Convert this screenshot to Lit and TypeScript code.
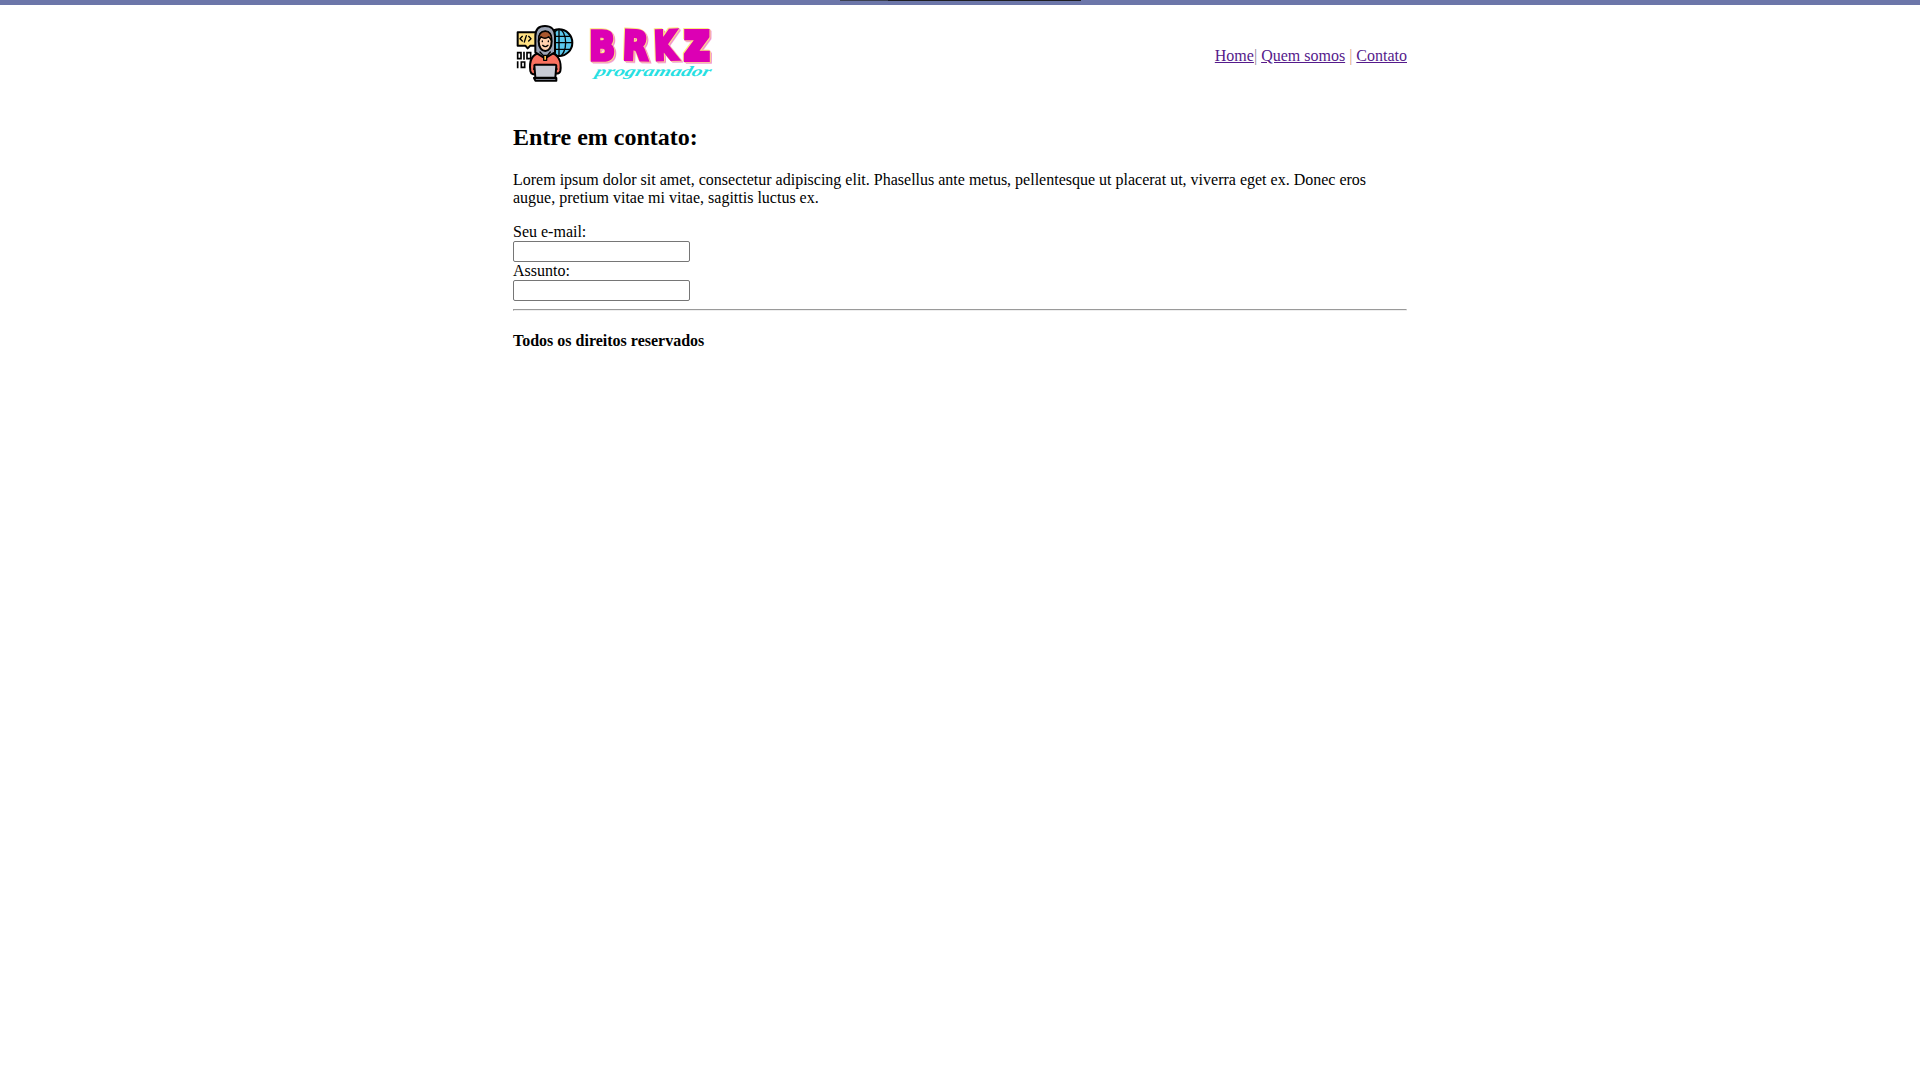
import { LitElement, html, css } from "lit";
import { customElement } from "lit/decorators.js";

@customElement("brkz-logo")
class BrkzLogo extends LitElement {
  static styles = css`
    :host { display: block; width: 207px; height: 75px; }
    svg { display: block; }
    .line { stroke: #000; stroke-width: 6; stroke-linejoin: round; stroke-linecap: round; }
    .thin { stroke: #000; stroke-width: 4; fill: none; stroke-linecap: round; stroke-linejoin: round; }
    .bits { stroke: #000; stroke-width: 5; fill: none; }
    .hair { fill: #a9572d; }
    .zip { fill: #ffc44d; }
    .brand {
      font: bold 118px "DejaVu Sans", sans-serif;
      fill: #dc00b4;
      stroke: #dc00b4;
      stroke-width: 11;
      stroke-linejoin: miter;
      filter: drop-shadow(-3px -3px 0 #ffe97e) drop-shadow(3px 2px 0 #ffd98a) drop-shadow(3px 3px 0 #f08ccb);
    }
    .wide { font-size: 112px; stroke-width: 18; }
    .script { font: italic bold 43px "Liberation Serif", serif; fill: #27dfe2; }
  `;

  render() {
    return html`<svg width="207" height="75" viewBox="24 0 621 225" role="img" aria-label="BRKZ programador">
      <circle class="line" cx="162" cy="83" r="40" fill="#5bc8ec" />
      <path class="thin" d="M162 43V123M128 64H196M122 83H202M128 103H196" />
      <ellipse class="thin" cx="162" cy="83" rx="20" ry="40" />
      <path class="line" d="M38 52H96V92H76L68 100L61 92H38Z" fill="#ffe183" />
      <path class="thin" d="M52 64L45 71L52 78M64 62L58 81M71 64L78 71L71 78" />
      <path class="bits" d="M38 113H48V131H38ZM57 110V134M66 113H77V131H66ZM38 139V160M49 141H59V157H49Z" />
      <path class="line" d="M76 168C72 140 78 119 106 112H135C162 119 170 142 166 168C163 180 151 176 142 174H96C86 180 78 178 76 168Z" fill="#f9715f" />
      <path class="line" d="M91 112V64C91 43 103 33 120 33S150 43 150 64V112L138 119L120 130L102 119Z" fill="#9ba3b4" />
      <path class="line" d="M101 79C101 57 108 49 121 49S140 58 140 79C140 98 131 108 121 108S101 98 101 79Z" fill="#ffd0ad" />
      <path class="thin hair" d="M102 76C99 57 109 49 121 49C134 49 141 60 139 76L131 65C122 73 113 69 108 65Z" />
      <path class="thin" d="M112 78V80M130 78V80M113 91Q121 99 129 91" />
      <path class="thin" d="M105 111L118 125M136 111L124 125" />
      <rect class="thin zip" x="116" y="121" width="9" height="15" />
      <path class="thin" d="M91 149L86 163M151 149L156 163" />
      <path class="line" d="M88 151Q88 149 91 149H150Q154 149 154 152L151 188H91Z" fill="#c7cbd5" />
      <path class="line" d="M87 189H154V197H91Z" fill="#9ba3b4" />
      <g class="brand">
        <text x="253" y="134" textLength="77.6" lengthAdjust="spacingAndGlyphs">B</text>
        <text x="354" y="133" textLength="76" lengthAdjust="spacingAndGlyphs" transform="rotate(2 392 90)">R</text>
        <text x="447" y="133" textLength="68" lengthAdjust="spacingAndGlyphs" transform="rotate(-2 485 90)">K</text>
        <text class="wide" x="540" y="132" textLength="71" lengthAdjust="spacingAndGlyphs">Z</text>
      </g>
      <text class="script" transform="translate(268 182) skewX(-18)" textLength="346" lengthAdjust="spacingAndGlyphs">programador</text>
    </svg>`;
  }
}

@customElement("app-root")
class AppRoot extends LitElement {
  static styles = css`
    :host { display: block; min-height: 1080px; background: #fff; color: #000; font: 16px/18px "Liberation Serif", "Times New Roman", serif; }
    .bar { height: 5px; background: #6c76a9; display: flex; justify-content: center; }
    .notch { width: 241px; height: 1px; background: linear-gradient(to right, #3c4152 48px, #1f1f24 48px); }
    .page { width: 894px; margin: 0 auto; padding-top: 10px; }
    header { display: flex; justify-content: space-between; height: 109px; }
    nav { padding-top: 32px; white-space: pre; }
    nav a { color: #551a8b; text-decoration: underline; }
    .sep { color: #d9a183; }
    .sep.first { color: #8a8098; }
    h2 { margin: 0 0 20px; font-size: 24px; line-height: 27px; }
    p { margin: 0 0 16px; }
    label { display: block; }
    input { display: block; box-sizing: border-box; width: 177px; height: 21px; margin: 0; padding: 1px 2px; border: 1px solid #767676; border-radius: 2px; background: #fff; }
    hr { margin: 8px 0 21px; border: 1px solid; border-color: #9a9a9a #eee #eee #9a9a9a; }
    h4 { margin: 0; font-size: 16px; }
  `;

  render() {
    return html`
      <div class="bar"><div class="notch"></div></div>
      <div class="page">
        <header>
          <brkz-logo></brkz-logo>
          <nav><a href="#">Home</a><span class="sep first">|</span> <a href="#">Quem somos</a> <span class="sep">|</span> <a href="#">Contato</a></nav>
        </header>
        <main>
          <h2>Entre em contato:</h2>
          <p>Lorem ipsum dolor sit amet, consectetur adipiscing elit. Phasellus ante metus, pellentesque ut placerat ut, viverra eget ex. Donec eros augue, pretium vitae mi vitae, sagittis luctus ex.</p>
          <form>
            <label for="email">Seu e-mail:</label>
            <input id="email" type="text" />
            <label for="assunto">Assunto:</label>
            <input id="assunto" type="text" />
          </form>
        </main>
        <hr />
        <footer><h4>Todos os direitos reservados</h4></footer>
      </div>
    `;
  }
}
